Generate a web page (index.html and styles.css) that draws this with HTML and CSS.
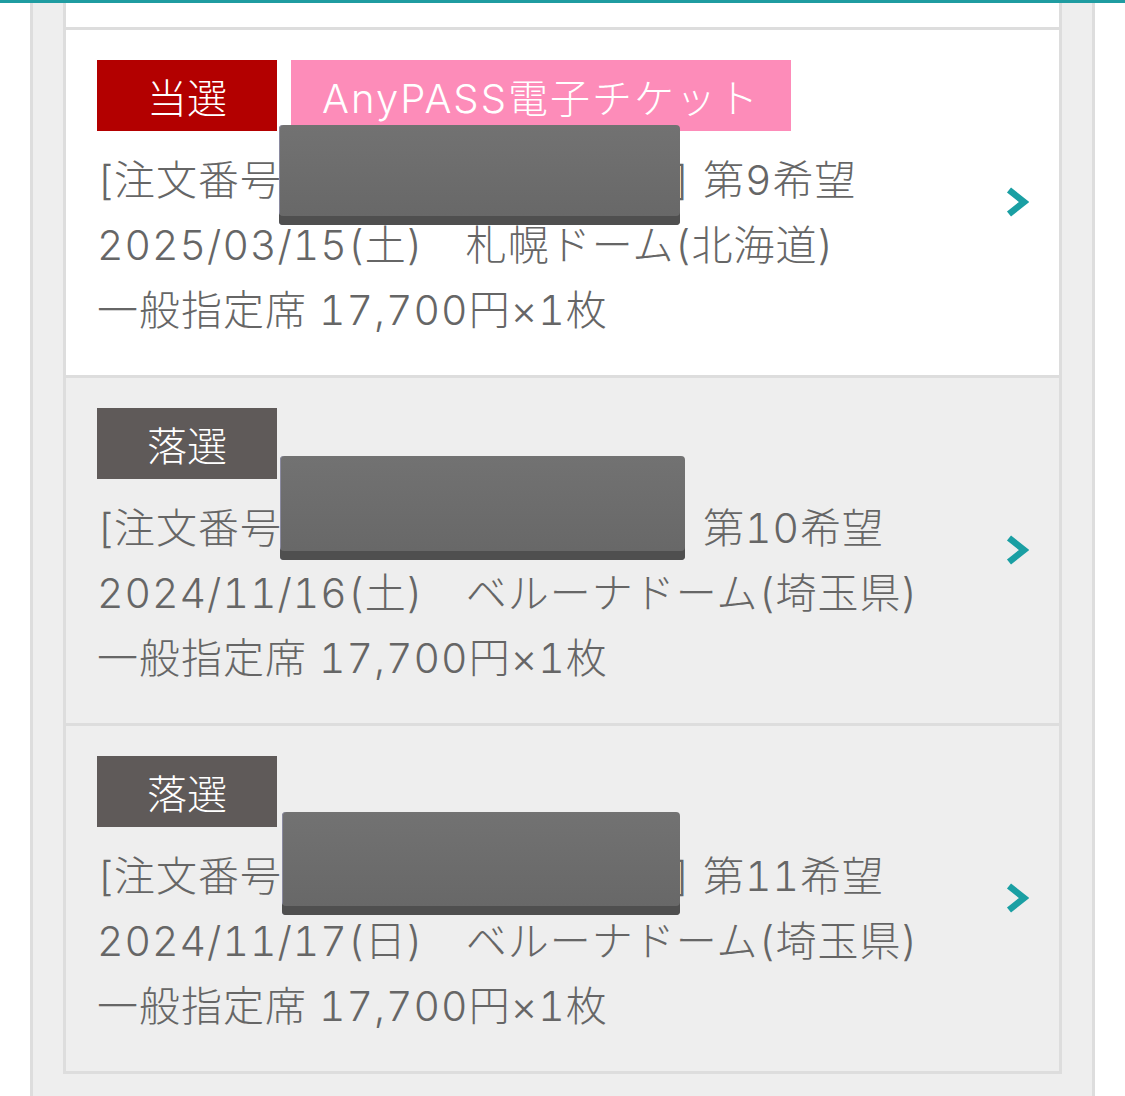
FILE: index.html
```html
<!DOCTYPE html>
<html lang="ja">
<head>
    <meta charset="UTF-8">
    <meta name="viewport" content="width=device-width, initial-scale=1.0">
    <title>抽選結果</title>
    <link rel="stylesheet" href="styles.css">
</head>
<body>
    <div class="top-bar"></div>

    <div class="column">
        <div class="entry-list">
            <div class="entry entry-prev"></div>

            <a class="entry entry-won" href="#">
                <div class="entry-body">
                    <div class="tags">
                        <span class="tag tag-won">当選</span>
                        <span class="tag tag-ticket">AnyPASS電子チケット</span>
                    </div>
                    <p class="line">[注文番号<span class="order-no">：0000000000</span>] 第9希望</p>
                    <p class="line">2025/03/15(土)　札幌ドーム(北海道)</p>
                    <p class="line">一般指定席 17,700円×1枚</p>
                </div>
                <svg class="chevron" width="24" height="32" viewBox="0 0 24 32">
                    <polyline points="4,4 19,16 4,28" fill="none" stroke="#1a9fa3" stroke-width="6.5"/>
                </svg>
                <span class="mask mask-1"></span>
            </a>

            <a class="entry" href="#">
                <div class="entry-body">
                    <div class="tags">
                        <span class="tag tag-lost">落選</span>
                    </div>
                    <p class="line">[注文番号<span class="order-no">：0000000000</span>] 第10希望</p>
                    <p class="line">2024/11/16(土)　ベルーナドーム(埼玉県)</p>
                    <p class="line">一般指定席 17,700円×1枚</p>
                </div>
                <svg class="chevron" width="24" height="32" viewBox="0 0 24 32">
                    <polyline points="4,4 19,16 4,28" fill="none" stroke="#1a9fa3" stroke-width="6.5"/>
                </svg>
                <span class="mask mask-2"></span>
            </a>

            <a class="entry" href="#">
                <div class="entry-body">
                    <div class="tags">
                        <span class="tag tag-lost">落選</span>
                    </div>
                    <p class="line">[注文番号<span class="order-no">：0000000000</span>] 第11希望</p>
                    <p class="line">2024/11/17(日)　ベルーナドーム(埼玉県)</p>
                    <p class="line">一般指定席 17,700円×1枚</p>
                </div>
                <svg class="chevron" width="24" height="32" viewBox="0 0 24 32">
                    <polyline points="4,4 19,16 4,28" fill="none" stroke="#1a9fa3" stroke-width="6.5"/>
                </svg>
                <span class="mask mask-3"></span>
            </a>
        </div>
    </div>
</body>
</html>
```

FILE: styles.css
```css
body {
    margin: 0;
    background-color: #fff;
    font-family: Inter, "Noto Sans CJK JP", sans-serif;
    font-weight: 300;
    color: #666;
    overflow: hidden;
}
.top-bar {
    height: 3px;
    background-color: #1f9ca1;
}
.column {
    margin: 0 30px;
    width: 1065px;
    min-height: 1093px;
    background-color: #eee;
    border-left: 3px solid #ddd;
    border-right: 3px solid #ddd;
    padding: 0 30px;
    box-sizing: border-box;
}
.entry-list {
    border: 3px solid #ddd;
    border-top: none;
}
.entry {
    position: relative;
    display: flex;
    align-items: center;
    padding: 30px 30px 32px 31px;
    background-color: #eee;
    color: inherit;
    text-decoration: none;
}
.entry + .entry {
    border-top: 3px solid #ddd;
}
.entry-prev {
    height: 24px;
    padding: 0;
    background-color: #fff;
}
.entry-won {
    background-color: #fff;
}
.entry-body {
    flex: 1;
}
.tags {
    display: flex;
    gap: 14px;
    margin-bottom: 17px;
}
.tag {
    display: flex;
    align-items: center;
    justify-content: center;
    height: 71px;
    font-size: 40px;
    color: #fff;
}
.tag-won {
    width: 180px;
    background-color: #b30000;
}
.tag-lost {
    width: 180px;
    background-color: #5f5a59;
}
.tag-ticket {
    width: 500px;
    letter-spacing: 2px;
    background-color: #fd8cb9;
}
.line {
    margin: 0;
    font-size: 41px;
    line-height: 65px;
    letter-spacing: 1px;
    white-space: nowrap;
    font-variant-numeric: tabular-nums;
}
.order-no {
    display: inline-block;
    width: 392px;
    overflow: hidden;
    vertical-align: top;
}
.chevron {
    flex: none;
}
.mask {
    position: absolute;
    border-radius: 4px;
    background: linear-gradient(#727272, #676767);
    box-shadow: inset 0 -9px 0 #4f4f4f, inset 1px 0 0 #8a8aa0;
}
.mask-1 {
    top: 95px;
    left: 213px;
    width: 401px;
    height: 100px;
}
.mask-2 {
    top: 78px;
    left: 214px;
    width: 405px;
    height: 104px;
}
.mask-3 {
    top: 86px;
    left: 216px;
    width: 398px;
    height: 103px;
}
```
